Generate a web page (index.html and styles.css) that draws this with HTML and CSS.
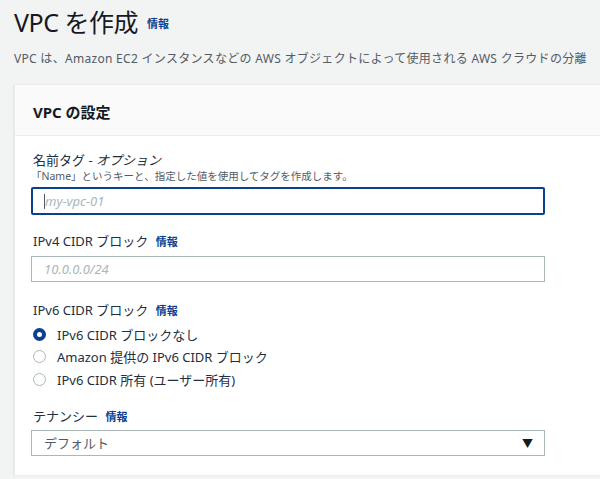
FILE: index.html
```html
<!doctype html>
<html lang="ja">
  <head>
    <meta charset="utf-8" />
    <meta name="viewport" content="width=device-width, initial-scale=1.0" />
    <title>VPC を作成</title>
    <link rel="stylesheet" href="styles.css">
  </head>

  <body>
    <div class="page">
      <div class="page_header">
        <h1 class="page_title">VPC を作成</h1>
        <a class="info_link info_big" href="#">情報</a>
      </div>
      <p class="page_desc">VPC は、Amazon EC2 インスタンスなどの AWS オブジェクトによって使用される AWS クラウドの分離</p>

      <div class="card">
        <div class="card_header">VPC の設定</div>
        <div class="card_body">
          <div class="field">
            <div class="field_label">名前タグ - <i>オプション</i></div>
            <div class="field_desc">「Name」というキーと、指定した値を使用してタグを作成します。</div>
            <div class="input input_focus"><span class="caret"></span><span class="placeholder">my-vpc-01</span></div>
          </div>

          <div class="field">
            <div class="field_label">IPv4 CIDR ブロック <a class="info_link" href="#">情報</a></div>
            <div class="input"><span class="placeholder">10.0.0.0/24</span></div>
          </div>

          <div class="field field_radio">
            <div class="field_label">IPv6 CIDR ブロック <a class="info_link" href="#">情報</a></div>
            <div class="radio_group">
              <div class="radio_row">
                <span class="radio checked"></span>
                <span>IPv6 CIDR ブロックなし</span>
              </div>
              <div class="radio_row">
                <span class="radio"></span>
                <span>Amazon 提供の IPv6 CIDR ブロック</span>
              </div>
              <div class="radio_row">
                <span class="radio"></span>
                <span>IPv6 CIDR 所有 (ユーザー所有)</span>
              </div>
            </div>
          </div>

          <div class="field">
            <div class="field_label">テナンシー <a class="info_link" href="#">情報</a></div>
            <div class="input select">
              <span class="select_value">デフォルト</span>
              <span class="select_arrow">▼</span>
            </div>
          </div>
        </div>
      </div>
    </div>
  </body>
</html>
```

FILE: styles.css
```css
html,
body {
  margin: 0;
  background-color: #f2f3f3;
  overflow: hidden;
}

body {
  font-family: "Noto Sans", "Noto Sans CJK JP", sans-serif;
  color: #232f3e;
}

.page {
  width: 640px;
  padding-left: 14px;
}

.page_header {
  display: flex;
  align-items: center;
  height: 40px;
  padding-top: 2px;
}

.page_title {
  margin: 0;
  font-size: 25px;
  font-weight: 400;
  line-height: 30px;
  letter-spacing: -0.5px;
  color: #16191f;
}

.info_link {
  color: #0b3f91;
  font-size: 11px;
  font-weight: bold;
  text-decoration: none;
  margin-left: 4px;
}

.info_big {
  margin-left: 9px;
  margin-top: 2px;
}

.page_desc {
  margin: 9px 0 0 0;
  font-size: 12px;
  line-height: 16px;
  letter-spacing: 0.3px;
  color: #545b64;
  white-space: nowrap;
}

.card {
  margin-top: 17px;
  background-color: #fff;
  border: 1px solid #eaeded;
  box-shadow: 0 1px 1px rgba(0, 28, 36, 0.3);
}

.card_header {
  height: 51px;
  display: flex;
  align-items: center;
  padding-left: 18px;
  padding-top: 2px;
  box-sizing: border-box;
  background-color: #fafafa;
  border-bottom: 1px solid #eaeded;
  font-size: 15px;
  font-weight: bold;
  color: #16191f;
}

.card_body {
  display: flex;
  flex-direction: column;
  gap: 18px;
  padding: 16px 0 19px 16px;
}

.field {
  width: 514px;
}

.field_radio {
  margin-top: 2px;
  margin-bottom: -1px;
}

.field_label {
  font-size: 13px;
  line-height: 16px;
  padding-left: 2px;
  margin-bottom: 6px;
}

.field_label i {
  font-style: italic;
}

.field_desc {
  font-size: 10.5px;
  line-height: 14px;
  color: #545b64;
  margin-top: -5px;
  margin-bottom: 4px;
}

.input {
  box-sizing: border-box;
  height: 26px;
  border: 1px solid #aab7b8;
  display: flex;
  align-items: center;
  padding-left: 12px;
  font-size: 13px;
}

.input_focus {
  height: 28px;
  border: 2px solid #0b3f91;
  border-radius: 2px;
  padding-left: 11px;
}

.caret {
  width: 1px;
  height: 15px;
  background-color: #545b64;
}

.placeholder {
  color: #aab7b8;
  font-style: italic;
}

.radio_group {
  display: flex;
  flex-direction: column;
  margin-top: -2px;
}

.radio_row {
  display: flex;
  align-items: center;
  height: 22.5px;
  font-size: 13px;
  padding-left: 2px;
}

.radio {
  box-sizing: border-box;
  width: 13px;
  height: 13px;
  border-radius: 50%;
  border: 1px solid #aab7b8;
  margin-right: 11px;
}

.radio.checked {
  border: 4px solid #0b3f91;
}

.select {
  justify-content: space-between;
  padding-right: 11px;
  margin-top: -1px;
}

.select_value {
  color: #545b64;
}

.select_arrow {
  font-size: 11px;
  color: #16191f;
}
```
